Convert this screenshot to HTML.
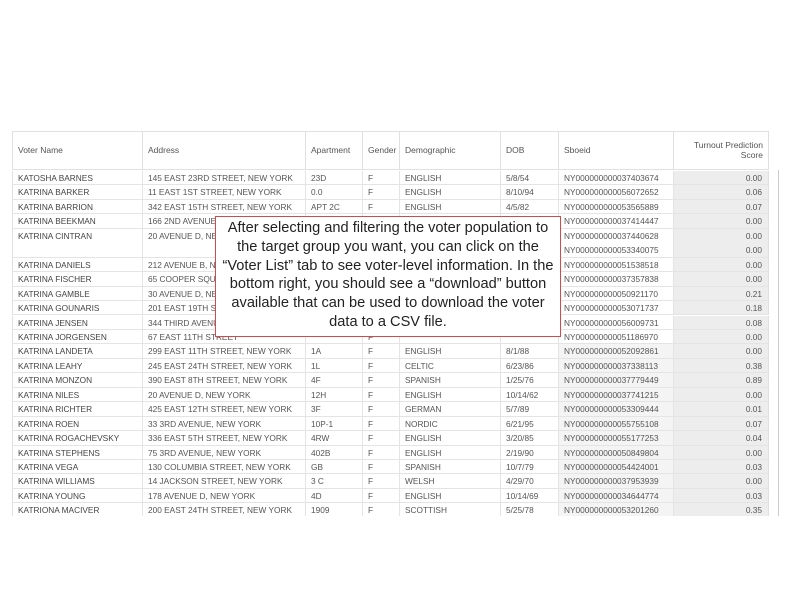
<!DOCTYPE html>
<html><head><style>
body{margin:0;width:792px;height:612px;background:#fff;position:relative;overflow:hidden;font-family:"Liberation Sans",sans-serif;}
.t{position:absolute;left:12px;top:131px;width:757px;border-top:1px solid #e0e0e0;}
.hd{position:absolute;top:131px;height:38px;font-size:8.5px;color:#555;border-left:1px solid #e0e0e0;box-sizing:border-box;padding:0 5px;display:flex;align-items:center;}
.r{position:absolute;left:12px;width:757px;font-size:8.3px;color:#555;border-bottom:1px solid #e4e4e4;box-sizing:border-box;}
.r span{position:absolute;top:0;height:100%;padding-left:5px;box-sizing:border-box;line-height:14px;border-left:1px solid #e4e4e4;white-space:nowrap;overflow:hidden;}
.box{position:absolute;left:215px;top:216px;width:346px;height:121px;border:1.5px solid #d24a4a;background:#fff;box-sizing:border-box;font-size:14.6px;color:#222;text-align:center;line-height:18.8px;padding-top:2px;}
</style></head><body>
<div style="position:absolute;left:12px;top:131px;width:757px;height:1px;background:#e0e0e0"></div>
<div class="hd" style="left:12px;width:130px;border-left:1px solid #e0e0e0">Voter Name</div>
<div class="hd" style="left:142px;width:163px">Address</div>
<div class="hd" style="left:305px;width:57px">Apartment</div>
<div class="hd" style="left:362px;width:37px">Gender</div>
<div class="hd" style="left:399px;width:101px">Demographic</div>
<div class="hd" style="left:500px;width:58px">DOB</div>
<div class="hd" style="left:558px;width:115px">Sboeid</div>
<div class="hd" style="left:673px;width:96px;text-align:right;justify-content:flex-end;border-right:1px solid #e0e0e0">Turnout Prediction<br>Score</div>
<div style="position:absolute;left:12px;top:169px;width:757px;height:1px;background:#e0e0e0"></div>
<div style="position:absolute;left:778px;top:170px;width:1px;height:346px;background:#ccc"></div>
<div id="rows"></div>
<script>
var d=[
["KATOSHA BARNES","145 EAST 23RD STREET, NEW YORK","23D","ENGLISH","5/8/54","NY000000000037403674","0.00",1],
["KATRINA BARKER","11 EAST 1ST STREET, NEW YORK","0.0","ENGLISH","8/10/94","NY000000000056072652","0.06",1],
["KATRINA BARRION","342 EAST 15TH STREET, NEW YORK","APT 2C","ENGLISH","4/5/82","NY000000000053565889","0.07",1],
["KATRINA BEEKMAN","166 2ND AVENUE, NEW YORK","","","","NY000000000037414447","0.00",1],
["KATRINA CINTRAN","20 AVENUE D, NEW YORK","","","","NY000000000037440628|NY000000000053340075","0.00|0.00",2],
["KATRINA DANIELS","212 AVENUE B, NEW YORK","","","","NY000000000051538518","0.00",1],
["KATRINA FISCHER","65 COOPER SQUARE","","","","NY000000000037357838","0.00",1],
["KATRINA GAMBLE","30 AVENUE D, NEW YORK","","","","NY000000000050921170","0.21",1],
["KATRINA GOUNARIS","201 EAST 19TH STREET","","","","NY000000000053071737","0.18",1],
["KATRINA JENSEN","344 THIRD AVENUE","","","","NY000000000056009731","0.08",1],
["KATRINA JORGENSEN","67 EAST 11TH STREET","","","","NY000000000051186970","0.00",1],
["KATRINA LANDETA","299 EAST 11TH STREET, NEW YORK","1A","ENGLISH","8/1/88","NY000000000052092861","0.00",1],
["KATRINA LEAHY","245 EAST 24TH STREET, NEW YORK","1L","CELTIC","6/23/86","NY000000000037338113","0.38",1],
["KATRINA MONZON","390 EAST 8TH STREET, NEW YORK","4F","SPANISH","1/25/76","NY000000000037779449","0.89",1],
["KATRINA NILES","20 AVENUE D, NEW YORK","12H","ENGLISH","10/14/62","NY000000000037741215","0.00",1],
["KATRINA RICHTER","425 EAST 12TH STREET, NEW YORK","3F","GERMAN","5/7/89","NY000000000053309444","0.01",1],
["KATRINA ROEN","33 3RD AVENUE, NEW YORK","10P-1","NORDIC","6/21/95","NY000000000055755108","0.07",1],
["KATRINA ROGACHEVSKY","336 EAST 5TH STREET, NEW YORK","4RW","ENGLISH","3/20/85","NY000000000055177253","0.04",1],
["KATRINA STEPHENS","75 3RD AVENUE, NEW YORK","402B","ENGLISH","2/19/90","NY000000000050849804","0.00",1],
["KATRINA VEGA","130 COLUMBIA STREET, NEW YORK","GB","SPANISH","10/7/79","NY000000000054424001","0.03",1],
["KATRINA WILLIAMS","14 JACKSON STREET, NEW YORK","3 C","WELSH","4/29/70","NY000000000037953939","0.00",1],
["KATRINA YOUNG","178 AVENUE D, NEW YORK","4D","ENGLISH","10/14/69","NY000000000034644774","0.03",1],
["KATRIONA MACIVER","200 EAST 24TH STREET, NEW YORK","1909","SCOTTISH","5/25/78","NY000000000053201260","0.35",1]];
var y=171,h="";
d.forEach(function(r,i){var hh=14.45*r[7];
var sb=r[5].split("|").join("<br>"),sc=r[6].split("|").join("<br>");
h+='<div class="r" style="top:'+y+'px;height:'+hh+'px'+(i==22?';border-bottom:none;height:'+(516-y)+'px;overflow:hidden':'')+'">'+
'<span style="left:0;width:130px;border-left:1px solid #e0e0e0;color:#444">'+r[0]+'</span>'+
'<span style="left:130px;width:163px">'+r[1]+'</span>'+
'<span style="left:293px;width:57px">'+r[2]+'</span>'+
'<span style="left:350px;width:37px">F</span>'+
'<span style="left:387px;width:101px">'+r[3]+'</span>'+
'<span style="left:488px;width:58px">'+r[4]+'</span>'+
'<span style="left:546px;width:115px;background:'+(i>10?'#f4f4f4':'#fff')+'">'+sb+'</span>'+
'<span style="left:661px;width:96px;text-align:right;padding-right:6px;background:#ededed;border-right:1px solid #e0e0e0">'+sc+'</span></div>';
y+=hh;});
document.getElementById("rows").innerHTML=h;
</script>
<div class="box">After selecting and filtering the voter population to<br>the target group you want, you can click on the<br>“Voter List” tab to see voter-level information. In the<br>bottom right, you should see a “download” button<br>available that can be used to download the voter<br>data to a CSV file.</div>
</body></html>
